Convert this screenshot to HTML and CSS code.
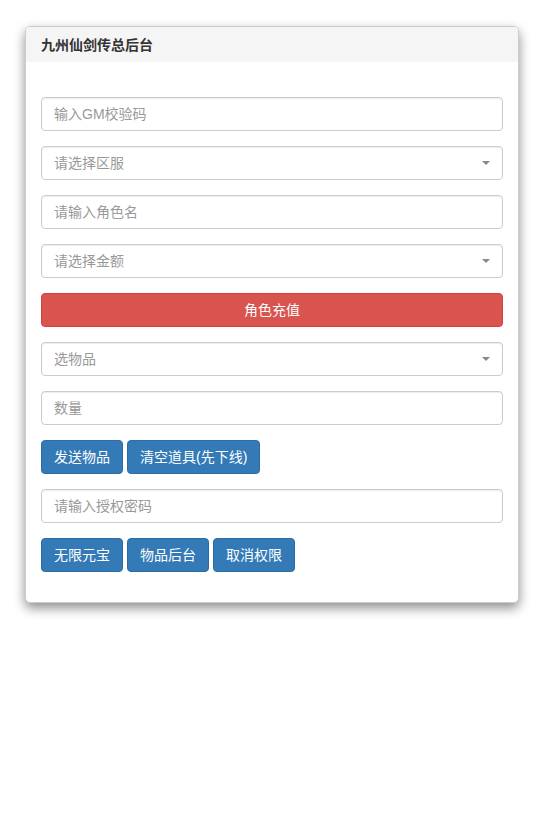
FILE: index.html
```html
<!DOCTYPE html>
<html lang="zh-CN">
<head>
<meta charset="utf-8">
<title>九州仙剑传总后台</title>
<link rel="stylesheet" href="styles.css">
</head>
<body>
<div class="panel">
  <div class="panel-heading">九州仙剑传总后台</div>
  <div class="panel-body">
    <div class="group"><div class="field"><span class="ph">输入GM校验码</span></div></div>
    <div class="group"><div class="field select"><span class="ph">请选择区服</span><span class="caret"></span></div></div>
    <div class="group"><div class="field"><span class="ph">请输入角色名</span></div></div>
    <div class="group"><div class="field select"><span class="ph">请选择金额</span><span class="caret"></span></div></div>
    <div class="group"><div class="btn btn-danger btn-block">角色充值</div></div>
    <div class="group"><div class="field select"><span class="ph">选物品</span><span class="caret"></span></div></div>
    <div class="group"><div class="field"><span class="ph">数量</span></div></div>
    <div class="group btns">
      <div class="btn btn-primary">发送物品</div>
      <div class="btn btn-primary">清空道具(先下线)</div>
    </div>
    <div class="group"><div class="field"><span class="ph">请输入授权密码</span></div></div>
    <div class="group btns">
      <div class="btn btn-primary">无限元宝</div>
      <div class="btn btn-primary">物品后台</div>
      <div class="btn btn-primary">取消权限</div>
    </div>
  </div>
</div>
</body>
</html>
```
FILE: styles.css
```css
* { box-sizing: border-box; }
html, body { margin: 0; background: #fff; }
body {
  padding: 26px 26px 26px 25px;
  font-family: "Liberation Sans", "Noto Sans CJK SC", sans-serif;
  font-size: 14px;
  line-height: 20px;
  color: #333;
}
.panel {
  border: 1px solid #ccc;
  border-radius: 5px;
  background: #fff;
  box-shadow: 0 5px 12px rgba(0,0,0,.45);
  overflow: hidden;
}
.panel-heading {
  background: #f5f5f5;
  height: 35px;
  padding: 8px 15px;
  font-weight: bold;
  font-size: 14px;
  color: #333;
}
.panel-body {
  padding: 35px 15px 15px;
}
.group { margin-bottom: 15px; }
.field {
  height: 34px;
  border: 1px solid #ccc;
  border-radius: 4px;
  padding: 6px 12px;
  box-shadow: inset 0 1px 1px rgba(0,0,0,.075);
  display: flex;
  align-items: center;
  justify-content: space-between;
}
.ph { color: #999; }
.caret {
  width: 0; height: 0;
  border-left: 4px solid transparent;
  border-right: 4px solid transparent;
  border-top: 4px solid #888;
}
.btns { display: flex; gap: 4px; }
.btn {
  height: 34px;
  padding: 6px 12px;
  border: 1px solid transparent;
  border-radius: 4px;
  color: #fff;
  text-align: center;
  white-space: nowrap;
}
.btn-block { display: block; width: 100%; }
.btn-primary { background: #337ab7; border-color: #2e6da4; }
.btn-danger { background: #d9534f; border-color: #d43f3a; }
```
